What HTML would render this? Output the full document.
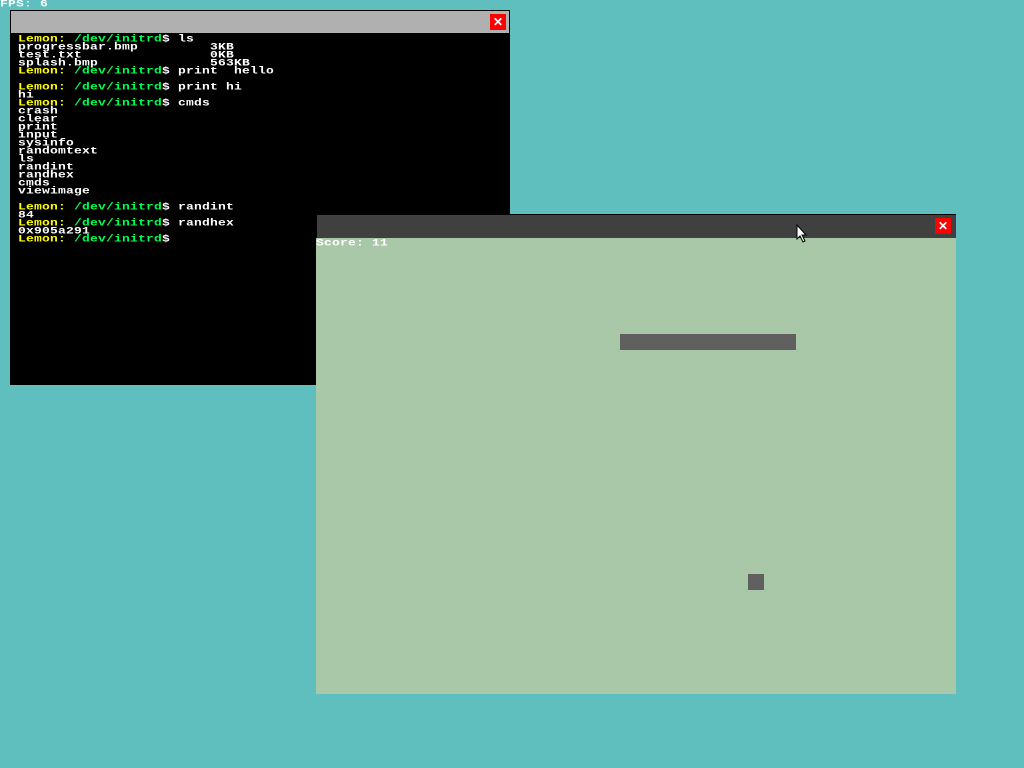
<!DOCTYPE html>
<html><head><style>
body{margin:0;width:1024px;height:768px;background:#5fbfbf;position:relative;overflow:hidden;font-family:"Liberation Mono",monospace;}
.t{position:absolute;font-size:13px;line-height:8px;font-weight:bold;letter-spacing:0.2px;white-space:pre;color:#fff;transform:scaleY(0.8);transform-origin:0 0;}
.y{color:#ffff00}.g{color:#00ff50}
.x{position:absolute;background:#f00;color:#fff;font:bold 12px "Liberation Sans",sans-serif;text-align:center;line-height:16px;width:16px;height:16px;}
</style></head><body>
<div class="t" style="left:0;top:0px;line-height:10px;">FPS: 6</div>
<div style="position:absolute;left:10px;top:10px;width:500px;height:375px;background:#000;"></div>
<div style="position:absolute;left:11px;top:11px;width:498px;height:22px;background:#b0b0b0;"></div>
<div class="x" style="left:490px;top:14px;">✕</div>
<div class="t" style="left:18px;top:35px;line-height:10px;"><span class="y">Lemon: </span><span class="g">/dev/initrd</span>$ ls
progressbar.bmp         3KB
test.txt                0KB
splash.bmp              563KB
<span class="y">Lemon: </span><span class="g">/dev/initrd</span>$ print  hello

<span class="y">Lemon: </span><span class="g">/dev/initrd</span>$ print hi
hi
<span class="y">Lemon: </span><span class="g">/dev/initrd</span>$ cmds
crash
clear
print
input
sysinfo
randomtext
ls
randint
randhex
cmds
viewimage

<span class="y">Lemon: </span><span class="g">/dev/initrd</span>$ randint
84
<span class="y">Lemon: </span><span class="g">/dev/initrd</span>$ randhex
0x905a291
<span class="y">Lemon: </span><span class="g">/dev/initrd</span>$</div>
<div style="position:absolute;left:316px;top:214px;width:640px;height:24px;background:#000;"></div>
<div style="position:absolute;left:317px;top:215px;width:639px;height:23px;background:#404040;"></div>
<div class="x" style="left:935px;top:218px;">✕</div>
<div style="position:absolute;left:316px;top:238px;width:640px;height:456px;background:#a8c8a8;"></div>
<div class="t" style="left:316px;top:239px;line-height:10px;">Score: 11</div>
<div style="position:absolute;left:620px;top:334px;width:176px;height:16px;background:#606060;"></div>
<div style="position:absolute;left:748px;top:574px;width:16px;height:16px;background:#606060;"></div>
<svg style="position:absolute;left:796px;top:224px" width="12" height="19"><path d="M1 1 L1 15 L4 12 L7 18 L9 17 L6 11 L10 11 Z" fill="#fff" stroke="#000" stroke-width="1"/></svg>
</body></html>
